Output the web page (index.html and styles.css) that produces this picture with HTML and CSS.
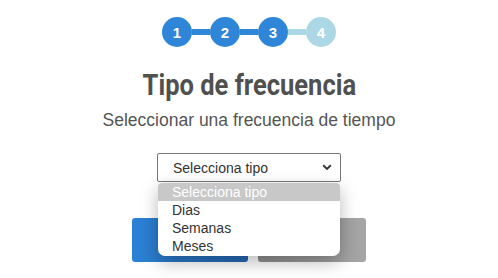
FILE: index.html
```html
<!DOCTYPE html>
<html lang="es">
<head>
<meta charset="utf-8">
<title>Tipo de frecuencia</title>
<link rel="stylesheet" href="styles.css">
</head>
<body>
<div class="page">
  <div class="stepper">
    <div class="step done">1</div>
    <div class="bar done"></div>
    <div class="step done">2</div>
    <div class="bar done"></div>
    <div class="step done">3</div>
    <div class="bar todo"></div>
    <div class="step todo">4</div>
  </div>
  <h1 class="title">Tipo de frecuencia</h1>
  <p class="subtitle">Seleccionar una frecuencia de tiempo</p>
  <div class="select-wrap">
    <div class="select">
      <span>Selecciona tipo</span>
      <svg class="chev" width="10" height="7" viewBox="0 0 10 7"><path d="M1.2 1.3 L5 5 L8.8 1.3" fill="none" stroke="#333" stroke-width="1.9"/></svg>
    </div>
    <div class="menu">
      <div class="opt active">Selecciona tipo</div>
      <div class="opt">Dias</div>
      <div class="opt">Semanas</div>
      <div class="opt">Meses</div>
    </div>
  </div>
  <div class="buttons">
    <div class="btn primary"></div>
    <div class="btn secondary"></div>
  </div>
</div>
</body>
</html>
```
FILE: styles.css
```css
html, body {
  margin: 0;
  padding: 0;
  background: #fff;
}
.page {
  width: 498px;
  height: 278px;
  overflow: hidden;
  display: flex;
  flex-direction: column;
  align-items: center;
  font-family: "Liberation Sans", Arial, sans-serif;
}
.stepper {
  display: flex;
  align-items: center;
  margin-top: 17px;
}
.step {
  width: 30px;
  height: 30px;
  border-radius: 50%;
  color: #fff;
  font-weight: bold;
  font-size: 15px;
  display: flex;
  align-items: center;
  justify-content: center;
}
.step.done { background: #2f86d8; }
.step.todo { background: #acd8e6; }
.bar {
  width: 18px;
  height: 6px;
}
.bar.done { background: #2f86d8; }
.bar.todo { background: #acd8e6; }
.title {
  margin: 21px 0 0;
  font-family: Roboto, sans-serif;
  font-weight: 700;
  font-size: 29px;
  line-height: 34px;
  color: #505050;
  transform: scaleX(0.88);
}
.subtitle {
  margin: 7px 0 0;
  font-size: 17.5px;
  line-height: 22px;
  color: #555;
}
.select-wrap {
  position: relative;
  margin-top: 22px;
}
.select {
  box-sizing: border-box;
  width: 184px;
  height: 29px;
  border: 1px solid #767676;
  border-radius: 2px;
  display: flex;
  align-items: center;
  justify-content: space-between;
  padding: 0 8px 0 15px;
  font-size: 14px;
  color: #333;
}
.chev { display: block; }
.menu {
  position: absolute;
  top: 30px;
  left: 1px;
  width: 182px;
  background: #fff;
  border-radius: 4px 4px 7px 7px;
  box-shadow: 0 6px 18px rgba(0, 0, 0, 0.28);
  overflow: hidden;
  z-index: 2;
  padding-bottom: 1px;
}
.opt {
  height: 18px;
  line-height: 18px;
  padding-left: 14px;
  font-size: 14px;
  color: #333;
}
.opt.active {
  background: #c8c8c8;
  color: #fff;
}
.buttons {
  display: flex;
  gap: 10px;
  margin-top: 36px;
}
.btn {
  height: 44px;
  border-radius: 3px;
}
.btn.primary {
  width: 116px;
  background: linear-gradient(90deg, #2c82d6, #2566b0);
}
.btn.secondary {
  width: 108px;
  background: linear-gradient(90deg, #8e8e8e, #a6a6a6);
}
```
